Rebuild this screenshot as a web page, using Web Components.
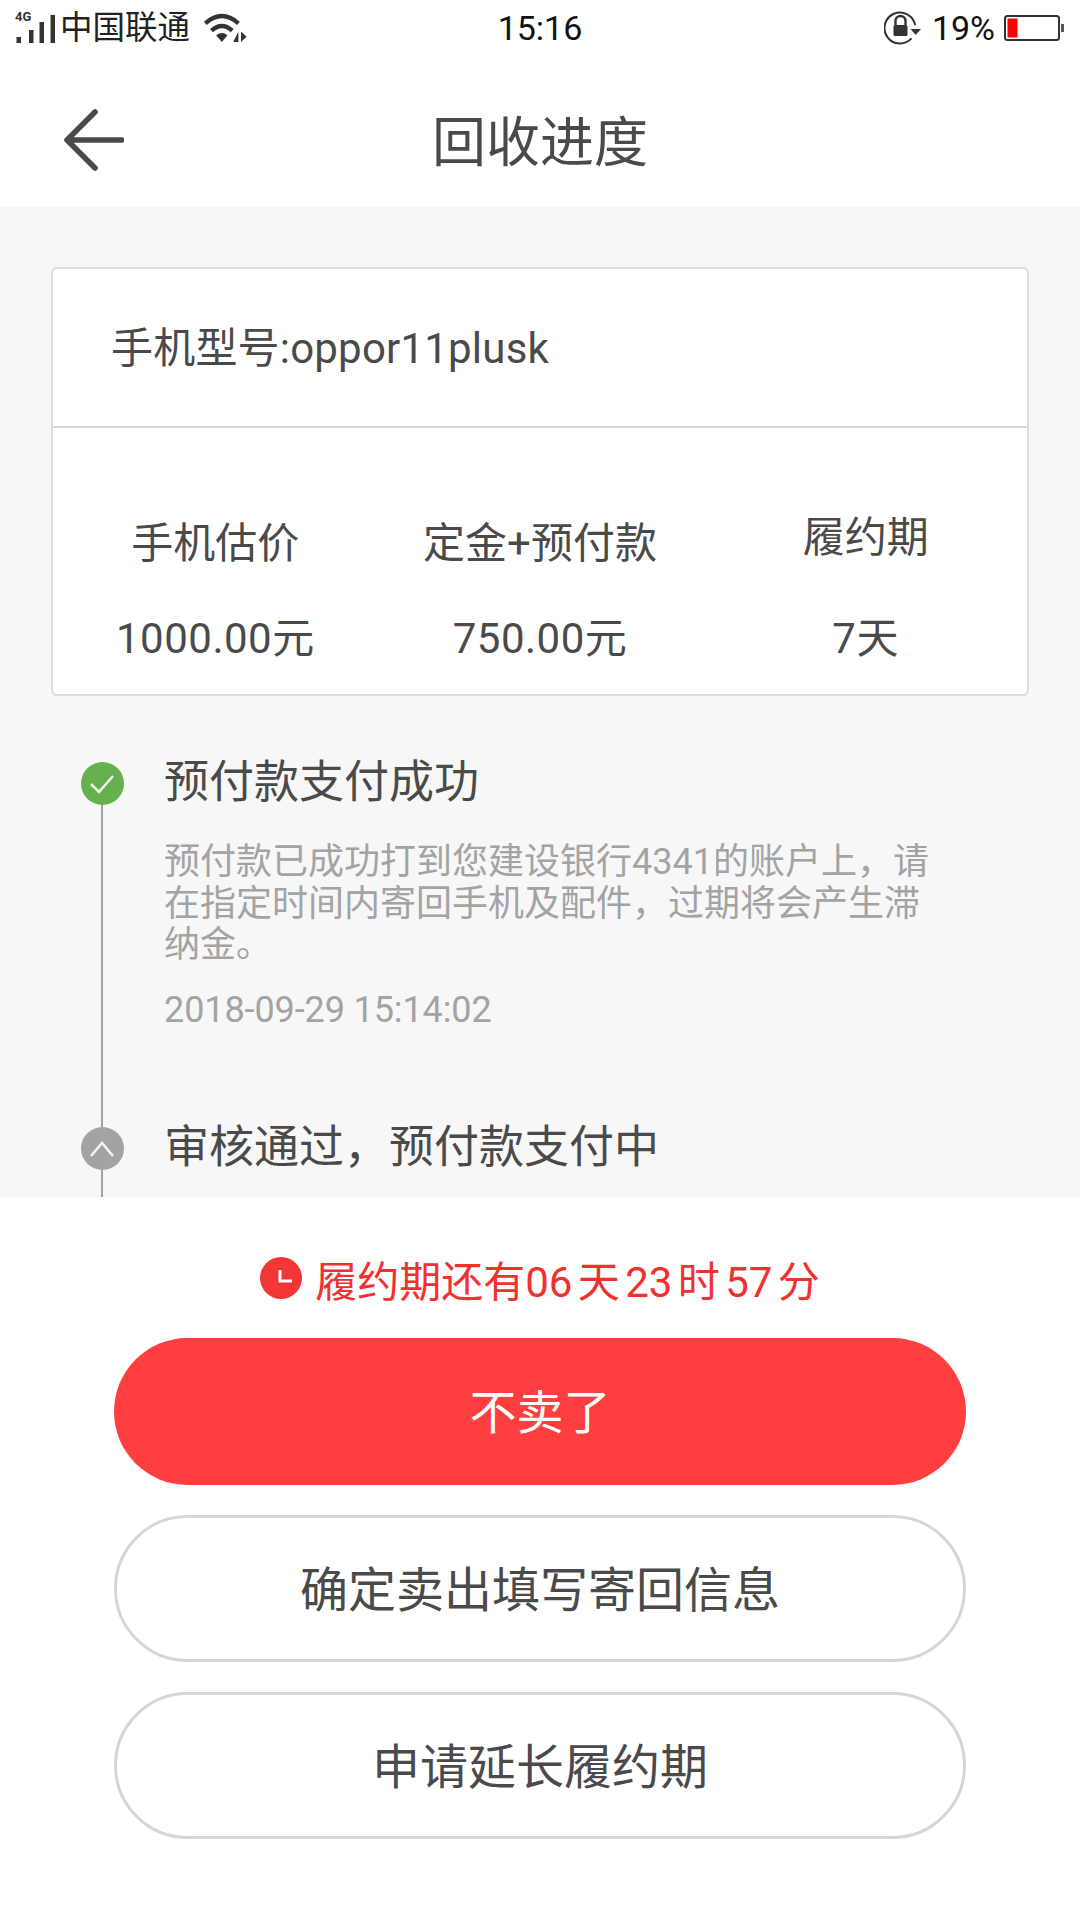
<!DOCTYPE html>
<html lang="zh">
<head>
<meta charset="utf-8">
<style>
  html, body { margin: 0; padding: 0; background: #fff; }
  body { width: 1080px; height: 1920px; overflow: hidden; font-family: Roboto, "Noto Sans CJK SC", sans-serif; color: #4a4a4a; }
  #page { display: flex; flex-direction: column; height: 1920px; }
</style>
</head>
<body>
<div id="page">
  <status-bar></status-bar>
  <nav-bar>回收进度</nav-bar>
  <scroll-area>
    <phone-card model="手机型号:oppor11plusk">
      <price-cell label="手机估价" value="1000.00元"></price-cell>
      <price-cell label="定金+预付款" value="750.00元"></price-cell>
      <price-cell label="履约期" value="7天" lift></price-cell>
    </phone-card>
    <time-line>
      <time-step state="done" title="预付款支付成功" stamp="2018-09-29 15:14:02">预付款已成功打到您建设银行4341的账户上，请在指定时间内寄回手机及配件，过期将会产生滞纳金。</time-step>
      <time-step state="wait" title="审核通过，预付款支付中"></time-step>
    </time-line>
  </scroll-area>
  <action-panel>
    <count-down>履约期还有06 天 23 时 57 分</count-down>
    <pill-button primary>不卖了</pill-button>
    <pill-button>确定卖出填写寄回信息</pill-button>
    <pill-button>申请延长履约期</pill-button>
  </action-panel>
</div>

<script>
// small helper, every element gets an open shadow root from a string
function shadow(el, html) {
  el.attachShadow({ mode: 'open' }).innerHTML = html;
}

class StatusBar extends HTMLElement {
  constructor() {
    super();
    shadow(this, `
      <style>
        :host { display: grid; grid-template-columns: 1fr auto 1fr; align-items: center; height: 56px; flex: none;
          color: #222; font-size: 34px; background: #fff; }
        .left { display: flex; align-items: center; padding-left: 15px; }
        .right { display: flex; align-items: center; justify-content: flex-end; padding-right: 16px; }
        .carrier { margin-left: 1px; font-size: 32.500px; line-height: 40px; }
        .time { color: #111; }
        .pct { margin: 0 9px 0 10px; color: #111; }
        svg { display: block; }
      </style>
      <div class="left">
        <svg width="44" height="36" viewBox="0 0 44 36">
          <text x="0" y="11" font-size="13" font-weight="700" font-family="Roboto" fill="#333">4G</text>
          <rect x="1.500" y="27" width="4.500" height="6" fill="#333"/>
          <rect x="14" y="20" width="4.500" height="13" fill="#333"/>
          <rect x="24.500" y="12" width="4.500" height="21" fill="#333"/>
          <rect x="35.500" y="5" width="4.500" height="28" fill="#333"/>
        </svg>
        <span class="carrier">中国联通</span>
        <svg width="46" height="31" viewBox="0 0 44 30" style="margin-left:13px">
          <g fill="none" stroke="#333" stroke-width="4.200">
            <path d="M2 10 Q18 -4 34 10"/>
            <path d="M8 17 Q18 8 28 17"/>
          </g>
          <path d="M12.500 21.500 Q18 17 23.500 21.500 L18 28 Z" fill="#333"/>
          <path d="M34 18 L34 28 L29 28 Z M36.500 18 L36.500 28 L42 23 Z" fill="#333"/>
        </svg>
      </div>
      <div class="time">15:16</div>
      <div class="right">
        <svg width="38" height="34" viewBox="0 0 38 34">
          <path d="M27.500 27.400 A15.500 15.500 0 1 1 31.200 14" fill="none" stroke="#333" stroke-width="2"/>
          <path d="M26.500 18 H37 L31.700 24 Z" fill="#333"/>
          <path d="M11.500 14 V10 a5 5 0 0 1 10 0 V14" fill="none" stroke="#333" stroke-width="2.400"/>
          <rect x="9.500" y="14" width="14" height="11" rx="1.500" fill="#333"/>
        </svg>
        <span class="pct">19%</span>
        <svg width="60" height="28" viewBox="0 0 60 28">
          <rect x="1" y="2" width="54" height="24" rx="2.500" fill="#fff" stroke="#333" stroke-width="2"/>
          <rect x="3.500" y="4.500" width="10" height="19" fill="#f00"/>
          <rect x="57" y="10" width="3" height="8" fill="#555"/>
        </svg>
      </div>`);
  }
}

class NavBar extends HTMLElement {
  constructor() {
    super();
    shadow(this, `
      <style>
        :host { display: flex; align-items: center; justify-content: center; position: relative; flex: none;
          height: 151px; background: #fff; }
        .title { font: 400 54px "Noto Sans CJK SC", sans-serif; color: #4a4a4a; margin-top: 14px; }
        svg { position: absolute; left: 62px; top: 53px; }
      </style>
      <svg width="62" height="62" viewBox="0 0 62 62">
        <path d="M33 3 L5 31 L33 59 M5 31 H60" fill="none" stroke="#4a4a4a" stroke-width="5.500" stroke-linecap="round" stroke-linejoin="round"/>
      </svg>
      <div class="title"><slot></slot></div>`);
  }
}

class ScrollArea extends HTMLElement {
  constructor() {
    super();
    shadow(this, `
      <style>
        :host { display: block; flex: none; height: 990px; overflow: hidden; background: #f7f7f7;
          padding: 60px 51px 0; box-sizing: border-box; }
      </style>
      <slot></slot>`);
  }
}

class PhoneCard extends HTMLElement {
  constructor() {
    super();
    shadow(this, `
      <style>
        :host { display: block; height: 429px; box-sizing: border-box; background: #fff; border: 2px solid #dcdcdc; border-radius: 6px; }
        .model { height: 159px; box-sizing: border-box; border-bottom: 2px solid #d6d6d6; padding: 0 0 6px 58px;
          display: flex; align-items: center; font: 400 42px Roboto, "Noto Sans CJK SC", sans-serif; letter-spacing: .2px; color: #4a4a4a; }
        .cells { display: grid; grid-template-columns: 1fr 1fr 1fr; }
      </style>
      <div class="model"></div>
      <div class="cells"><slot></slot></div>`);
    this.shadowRoot.querySelector('.model').textContent = this.getAttribute('model');
  }
}

class PriceCell extends HTMLElement {
  constructor() {
    super();
    shadow(this, `
      <style>
        :host { display: flex; flex-direction: column; align-items: center; padding-top: 88px; font-size: 42px; color: #4a4a4a; }
        :host([lift]) { padding: 82px 0 0 2px; }
        .label { height: 56px; line-height: 56px; }
        .value { margin-top: 39px; height: 56px; line-height: 56px; letter-spacing: .5px; }
        :host([lift]) .value { margin-top: 45px; }
      </style>
      <div class="label"></div><div class="value"></div>`);
    this.shadowRoot.querySelector('.label').textContent = this.getAttribute('label');
    this.shadowRoot.querySelector('.value').textContent = this.getAttribute('value');
  }
}

class TimeLine extends HTMLElement {
  constructor() {
    super();
    shadow(this, `
      <style>
        :host { display: block; padding: 66px 0 0 29px; }
      </style>
      <slot></slot>`);
  }
}

class TimeStep extends HTMLElement {
  constructor() {
    super();
    const done = this.getAttribute('state') === 'done';
    shadow(this, `
      <style>
        :host { display: grid; grid-template-columns: 44px 1fr; column-gap: 40px; }
        .rail { display: flex; flex-direction: column; align-items: center; }
        .dot { flex: none; width: 43px; height: 43px; border-radius: 50%; display: flex; align-items: center; justify-content: center; }
        .line { flex: 1; width: 2px; background: #a3a3a3; }
        .body { padding-bottom: 96px; }
        .title { font: 400 45px/56px "Noto Sans CJK SC", sans-serif; color: #4a4a4a; margin-top: -11px; }
        .desc { font: 400 36px/41.700px Roboto, "Noto Sans CJK SC", sans-serif; color: #a3a3a3; width: 768px; margin-top: 35px; }
        .stamp { font: 400 36px/42px Roboto, sans-serif; letter-spacing: -.1px; color: #a3a3a3; margin-top: 22px; }
        .desc:empty, .stamp:empty { display: none; }
      </style>
      <div class="rail">
        <div class="dot" style="background:${done ? '#66b04f' : '#a3a3a3'}">
          ${done
            ? '<svg width="26" height="22" viewBox="0 0 26 22"><path d="M2 11 L10 19 L24 3" fill="none" stroke="#f2f7ee" stroke-width="2.500"/></svg>'
            : '<svg width="26" height="18" viewBox="0 0 26 18"><path d="M2 16 L13 3 L24 16" fill="none" stroke="#f4f4f4" stroke-width="2.500"/></svg>'}
        </div>
        <div class="line"></div>
      </div>
      <div class="body">
        <div class="title"></div>
        <div class="desc"><slot></slot></div>
        <div class="stamp"></div>
      </div>`);
    this.shadowRoot.querySelector('.title').textContent = this.getAttribute('title');
    this.shadowRoot.querySelector('.stamp').textContent = this.getAttribute('stamp') || '';
    if (!this.textContent.trim()) this.shadowRoot.querySelector('.desc').style.display = 'none';
  }
}

class ActionPanel extends HTMLElement {
  constructor() {
    super();
    shadow(this, `
      <style>
        :host { display: flex; flex-direction: column; align-items: center; flex: 1; background: #fff; padding-top: 53px; }
      </style>
      <slot></slot>`);
  }
}

class CountDown extends HTMLElement {
  constructor() {
    super();
    shadow(this, `
      <style>
        :host { display: flex; align-items: center; height: 56px; margin-bottom: 32px; color: #f23030;
          font: 400 42px Roboto, "Noto Sans CJK SC", sans-serif; word-spacing: -5px; }
        svg { margin-right: 13px; }
      </style>
      <svg width="42" height="42" viewBox="0 0 42 42">
        <circle cx="21" cy="21" r="21" fill="#f23535"/>
        <path d="M20 13 V24 H32" fill="none" stroke="#fff" stroke-width="3"/>
      </svg>
      <slot></slot>`);
  }
}

class PillButton extends HTMLElement {
  constructor() {
    super();
    shadow(this, `
      <style>
        :host { display: flex; align-items: center; justify-content: center; box-sizing: border-box; width: 852px; height: 147px;
          margin-bottom: 30px; padding-bottom: 6px; border: 3px solid #d6d6d6; border-radius: 74px; background: #fff;
          font: 400 48px "Noto Sans CJK SC", sans-serif; color: #4a4a4a; }
        :host([primary]) { background: #ff3f3f; border: 0; color: #fff; font-size: 47px; }
      </style>
      <slot></slot>`);
  }
}

customElements.define('status-bar', StatusBar);
customElements.define('nav-bar', NavBar);
customElements.define('scroll-area', ScrollArea);
customElements.define('phone-card', PhoneCard);
customElements.define('price-cell', PriceCell);
customElements.define('time-line', TimeLine);
customElements.define('time-step', TimeStep);
customElements.define('action-panel', ActionPanel);
customElements.define('count-down', CountDown);
customElements.define('pill-button', PillButton);
</script>
</body>
</html>
